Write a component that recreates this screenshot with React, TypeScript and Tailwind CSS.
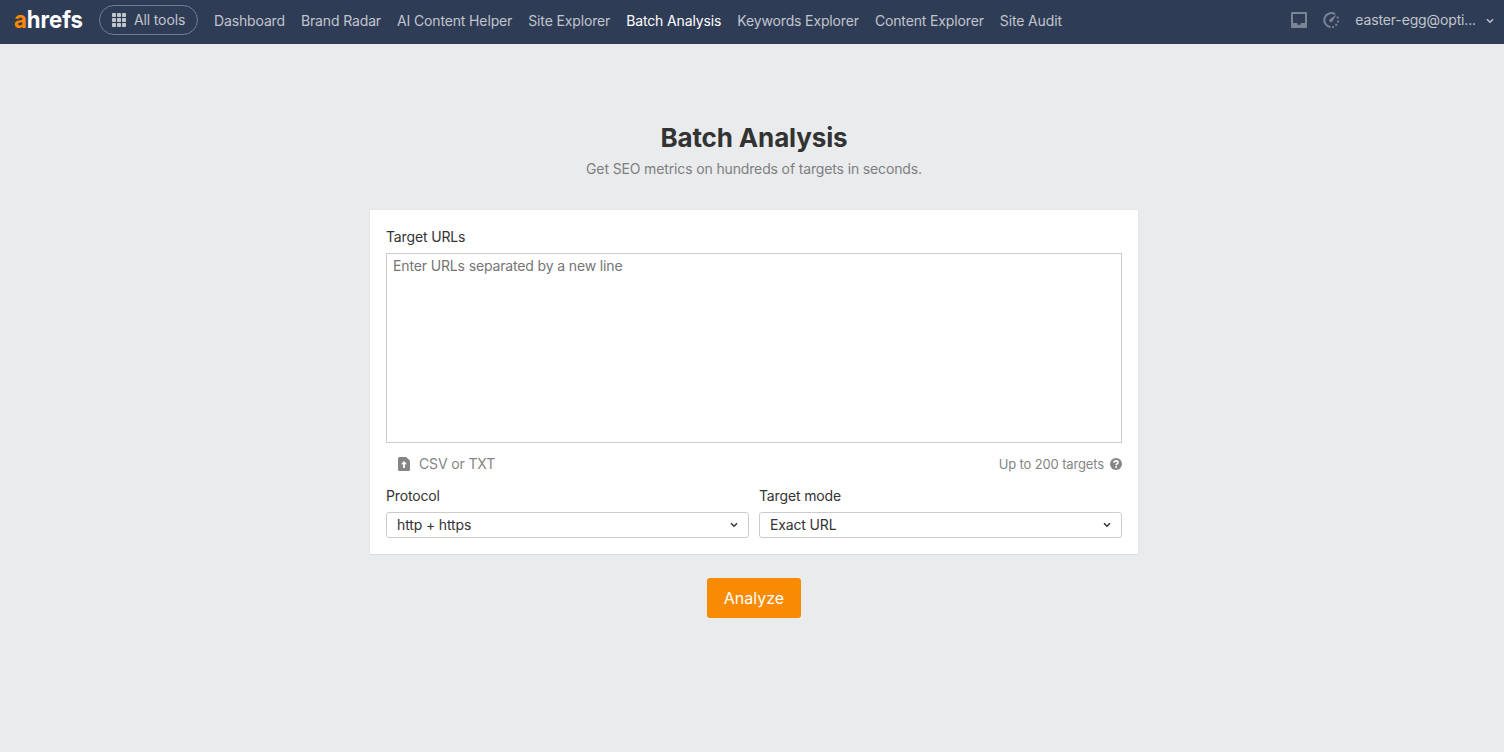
import React from "react";

const navItems = [
  "Dashboard",
  "Brand Radar",
  "AI Content Helper",
  "Site Explorer",
  "Batch Analysis",
  "Keywords Explorer",
  "Content Explorer",
  "Site Audit",
];

export default function App() {
  return (
    <div className="min-h-screen bg-[#eaebed] font-['Inter',sans-serif] text-sm tracking-[-0.14px] text-[#333]">
      <Header />

      <main className="flex flex-col items-center pt-[76px] pl-1">
        <h1 className="text-[26px] leading-9 font-bold">Batch Analysis</h1>
        <p className="mt-[3px] leading-5 text-[#7d7e80]">
          Get SEO metrics on hundreds of targets in seconds.
        </p>

        {/* Form card */}
        <section className="mt-[31px] w-[768px] bg-white px-4 pt-[17px] pb-4 shadow-[0_0_0_1px_rgba(0,0,0,0.015),0_1px_0_rgba(0,0,0,0.04)]">
          <label htmlFor="urls" className="block leading-5">
            Target URLs
          </label>
          <textarea
            id="urls"
            placeholder="Enter URLs separated by a new line"
            className="mt-1.5 block h-[190px] w-full resize-none border border-[#ccc] px-1.5 py-0.5 leading-5 outline-none placeholder:text-[#757575]"
          />

          <div className="mt-[11px] flex h-5 items-center justify-between text-[#858585]">
            <button className="flex items-center pl-3">
              <UploadIcon />
              <span className="ml-[9px]">CSV or TXT</span>
            </button>
            <div className="flex items-center text-[13px]">
              Up to 200 targets
              <HelpIcon />
            </div>
          </div>

          <div className="mt-3 grid grid-cols-2 gap-2.5">
            <SelectField label="Protocol" value="http + https" />
            <SelectField label="Target mode" value="Exact URL" />
          </div>
        </section>

        <button className="mt-6 h-10 w-[94px] rounded-[3px] bg-[#f98b04] text-base tracking-normal text-white">
          Analyze
        </button>
      </main>
    </div>
  );
}

function Header() {
  return (
    <header className="flex h-11 items-start bg-[#2f3c56] text-[#c1c5cc]">
      <Logo />
      <button className="mt-[5px] ml-[15px] flex h-[30px] w-[99px] items-center rounded-full border border-[#747d8e] pl-3">
        <GridIcon />
        <span className="ml-2">All tools</span>
      </button>

      <nav className="mt-[11px] ml-4 flex gap-4 leading-5">
        {navItems.map((item) => (
          <a key={item} className={item === "Batch Analysis" ? "text-white" : ""}>
            {item}
          </a>
        ))}
      </nav>

      {/* Account area */}
      <div className="mt-2.5 mr-2.5 ml-auto flex h-5 items-center">
        <InboxIcon />
        <GaugeIcon />
        <span className="ml-4">easter-egg@opti...</span>
        <Chevron className="ml-2.5 mt-0.5" />
      </div>
    </header>
  );
}

function SelectField({ label, value }: { label: string; value: string }) {
  return (
    <div>
      <div className="leading-5">{label}</div>
      <button className="mt-1.5 flex h-[26px] w-full items-center justify-between rounded-[3px] border border-[#ccc] pr-2.5 pl-2.5">
        {value}
        <Chevron />
      </button>
    </div>
  );
}

function Logo() {
  return (
    <svg width="69" height="40" className="ml-[15px] overflow-visible tracking-normal" aria-label="ahrefs">
      <text
        x="-1"
        y="28"
        fontSize="24"
        fontWeight="700"
        textLength="69"
        lengthAdjust="spacingAndGlyphs"
        fill="#fff"
      >
        <tspan fill="#ff8800">a</tspan>hrefs
      </text>
    </svg>
  );
}

function GridIcon() {
  return (
    <svg width="14" height="14" fill="currentColor">
      {[0, 5, 10].map((y) =>
        [0, 5, 10].map((x) => (
          <rect key={`${x}-${y}`} x={x} y={y} width="4" height="4" rx="0.8" />
        ))
      )}
    </svg>
  );
}

function InboxIcon() {
  return (
    <svg width="16" height="16" viewBox="0 0 16 16" className="text-[#7b8495]">
      <path
        fill="currentColor"
        fillRule="evenodd"
        d="M1 0h14a1 1 0 0 1 1 1v14a1 1 0 0 1-1 1H1a1 1 0 0 1-1-1V1a1 1 0 0 1 1-1Zm1 2v9h4a2 2 0 0 0 4 0h4V2H2Z"
      />
    </svg>
  );
}

function GaugeIcon() {
  return (
    <svg width="16" height="16" viewBox="0 0 16 16" fill="none" className="ml-4 text-[#7b8495]">
      <path d="M12 2.1A7 7 0 1 0 7.5 15" stroke="currentColor" strokeWidth="2" />
      <path d="m6.7 7.2 6.8-4.7-4.2 7a1.7 1.7 0 1 1-2.6-2.3Z" fill="currentColor" />
      <g fill="currentColor">
        <rect x="13.6" y="4.6" width="2" height="2" rx="0.5" />
        <rect x="14" y="8.4" width="2" height="2" rx="0.5" />
        <rect x="12.2" y="11.8" width="2" height="2" rx="0.5" />
        <rect x="9" y="14" width="2" height="2" rx="0.5" />
      </g>
    </svg>
  );
}

function UploadIcon() {
  return (
    <svg width="12" height="14" viewBox="0 0 12 14">
      <path fill="currentColor" d="M1.5 0h6.7L12 3.8v8.7a1.5 1.5 0 0 1-1.5 1.5h-9A1.5 1.5 0 0 1 0 12.5v-11A1.5 1.5 0 0 1 1.5 0Z" />
      <path d="M6 4 3 7.3h2.1V11h1.8V7.3H9L6 4Z" fill="#fff" />
    </svg>
  );
}

function HelpIcon() {
  return (
    <svg width="12" height="12" viewBox="0 0 12 12" className="ml-1.5">
      <circle cx="6" cy="6" r="6" fill="currentColor" />
      <path
        d="M4 4.8C4 3.5 4.9 2.9 6 2.9s2 .6 2 1.6c0 1.3-1.9 1.2-1.9 2.7"
        fill="none"
        stroke="#fff"
        strokeWidth="1.6"
      />
      <circle cx="6.1" cy="9" r="0.95" fill="#fff" />
    </svg>
  );
}

function Chevron({ className }: { className?: string }) {
  return (
    <svg width="8" height="6" viewBox="0 0 8 6" fill="none" className={className}>
      <path d="m1 1.2 3 3 3-3" stroke="currentColor" strokeWidth="1.5" />
    </svg>
  );
}
